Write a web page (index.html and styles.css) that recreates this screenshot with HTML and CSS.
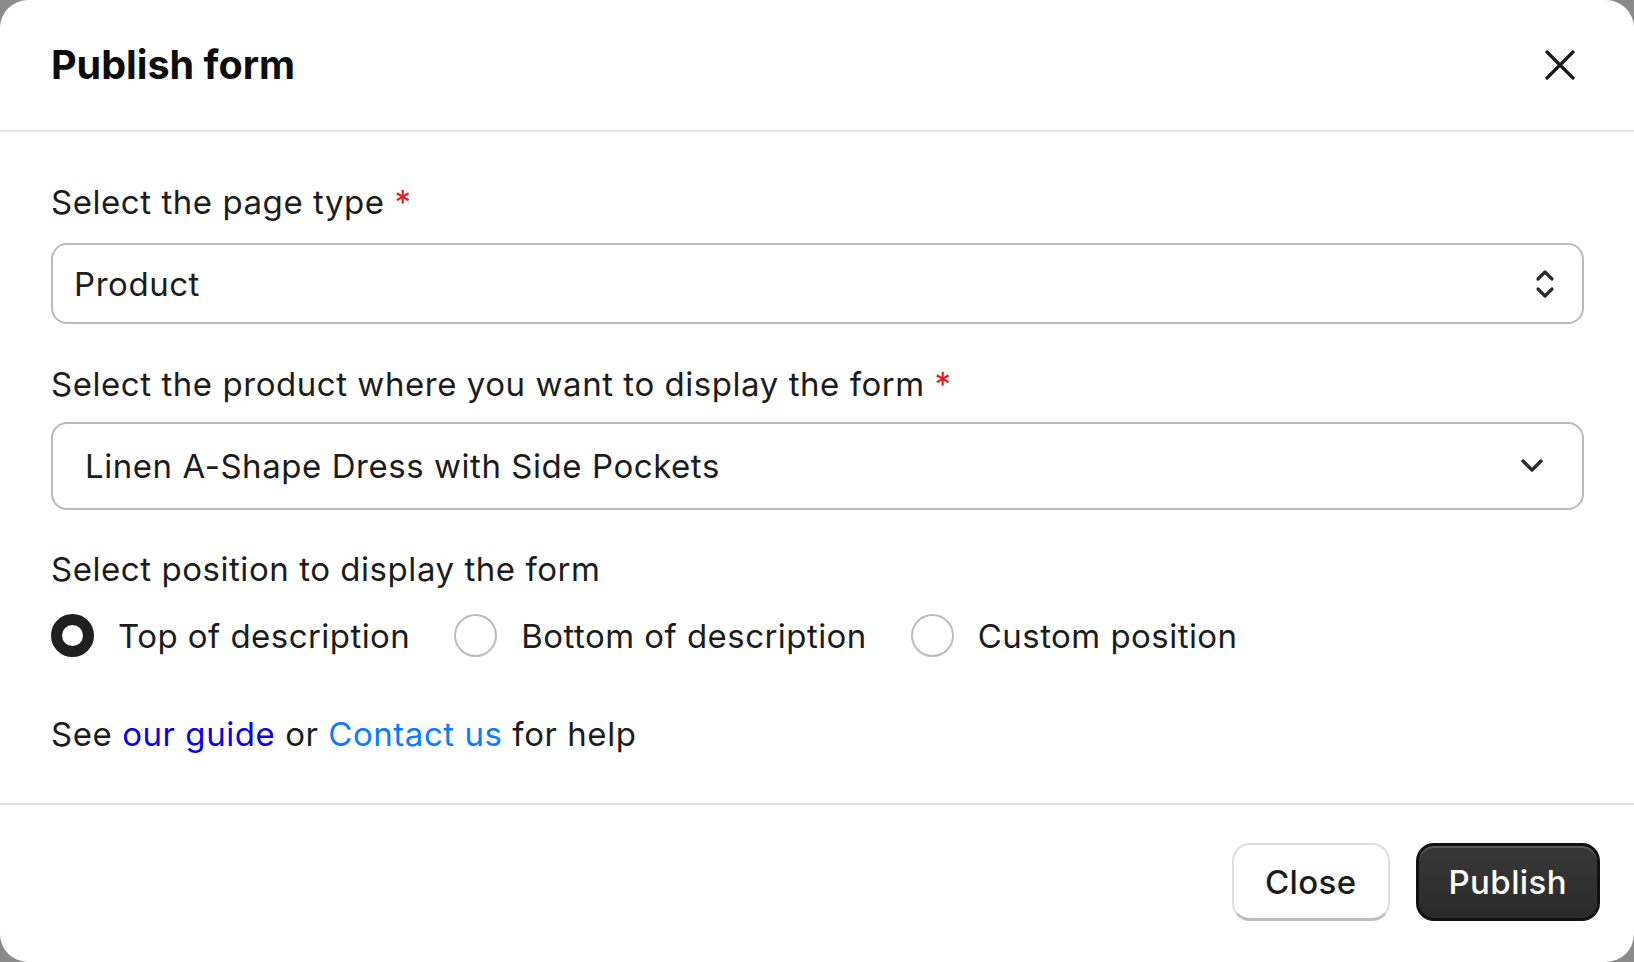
FILE: index.html
```html
<!DOCTYPE html>
<html lang="en">
<head>
<meta charset="utf-8">
<title>Publish form</title>
<link rel="stylesheet" href="styles.css">
</head>
<body>
<div class="modal">
  <header class="header">
    <h2 class="title">Publish form</h2>
    <button class="close-x" aria-label="Close">
      <svg width="30" height="30" viewBox="0 0 30 30"><path d="M2 2 L28 28 M28 2 L2 28" stroke="#1a1a1a" stroke-width="3.2" stroke-linecap="round" fill="none"/></svg>
    </button>
  </header>
  <main class="body">
    <p class="label">Select the page type <span class="req">*</span></p>
    <div class="field field-native">
      <span class="value">Product</span>
      <svg class="stepper" width="20" height="32" viewBox="0 0 20 32"><path d="M3 11 L10 4 L17 11 M3 21 L10 28 L17 21" stroke="#2b2b2b" stroke-width="3.2" stroke-linecap="round" stroke-linejoin="round" fill="none"/></svg>
    </div>
    <p class="label label-gap">Select the product where you want to display the form <span class="req">*</span></p>
    <div class="field field-custom">
      <span class="value">Linen A-Shape Dress with Side Pockets</span>
      <svg class="chev" width="24" height="16" viewBox="0 0 24 16"><path d="M3 3 L12 12 L21 3" stroke="#2b2b2b" stroke-width="3.4" stroke-linecap="round" stroke-linejoin="round" fill="none"/></svg>
    </div>
    <p class="label label-gap2">Select position to display the form</p>
    <div class="radios">
      <label class="radio-opt"><span class="radio checked"></span><span>Top of description</span></label>
      <label class="radio-opt"><span class="radio"></span><span>Bottom of description</span></label>
      <label class="radio-opt"><span class="radio"></span><span>Custom position</span></label>
    </div>
    <p class="help">See <a class="link-guide" href="#">our guide</a> or <a class="link-contact" href="#">Contact us</a> for help</p>
  </main>
  <footer class="footer">
    <button class="btn btn-secondary">Close</button>
    <button class="btn btn-primary">Publish</button>
  </footer>
</div>
</body>
</html>
```

FILE: styles.css
```css
html, body {
  margin: 0;
  height: 100%;
}
body {
  background: #8a8a8a;
  font-family: Inter, "Noto Sans", "Liberation Sans", sans-serif;
  color: #1c1c1c;
}
.modal {
  width: 1634px;
  height: 962px;
  background: #fff;
  border-radius: 28px;
  overflow: hidden;
  display: flex;
  flex-direction: column;
}
.header {
  box-sizing: border-box;
  height: 132px;
  flex-shrink: 0;
  border-bottom: 2px solid #e3e3e3;
  display: flex;
  align-items: center;
  justify-content: space-between;
  padding: 0 59px 0 51px;
}
.title {
  margin: 0;
  font-size: 39.5px;
  line-height: 48px;
  font-weight: 700;
  color: #0d0d0d;
}
.close-x {
  border: 0;
  background: none;
  padding: 0;
  width: 30px;
  height: 30px;
  display: flex;
}
.body {
  flex: 1;
  padding: 50px 50px 0 51px;
  font-size: 33px;
  letter-spacing: 0.55px;
}
.label {
  margin: 0;
  line-height: 40px;
}
.label-gap { margin-top: 40px; }
.label-gap2 { margin-top: 39px; }
.req { color: #e51c1c; }
.field {
  box-sizing: border-box;
  border: 2px solid #b9b9b9;
  border-radius: 16px;
  display: flex;
  align-items: center;
  justify-content: space-between;
}
.field-native {
  margin-top: 21px;
  height: 81px;
  padding: 0 27px 0 21px;
}
.field-custom {
  margin-top: 18px;
  height: 88px;
  padding: 0 38px 0 32px;
}
.stepper, .chev { display: block; }
.radios {
  margin-top: 25px;
  display: flex;
  gap: 44px;
  height: 43px;
  align-items: center;
}
.radio-opt {
  display: flex;
  align-items: center;
  gap: 24px;
  letter-spacing: 0.45px;
}
.radio {
  box-sizing: border-box;
  width: 43px;
  height: 43px;
  border-radius: 50%;
  border: 2px solid #bcbcbc;
  background: #fff;
}
.radio.checked {
  border: 11px solid #1f1f1f;
}
.help {
  margin: 57px 0 0;
  line-height: 40px;
}
.help a { text-decoration: none; }
.link-guide { color: #0a00ee; }
.link-contact { color: #0b7bff; }
.footer {
  box-sizing: border-box;
  height: 159px;
  flex-shrink: 0;
  border-top: 2px solid #e3e3e3;
  display: flex;
  justify-content: flex-end;
  align-items: flex-start;
  gap: 26px;
  padding: 38px 34px 0 0;
}
.btn {
  box-sizing: border-box;
  height: 78px;
  border-radius: 18px;
  font-family: inherit;
  font-size: 33px;
  font-weight: 500;
  letter-spacing: 0.4px;
  cursor: pointer;
}
.btn-secondary {
  background: #fff;
  color: #1c1c1c;
  border: 2px solid #dedede;
  border-bottom: 3px solid #bdbdbd;
  padding: 0 31px;
}
.btn-primary {
  background: linear-gradient(#383838, #2a2a2a);
  color: #fff;
  border: 3px solid #111;
  box-shadow: inset 0 2px 0 rgba(255, 255, 255, 0.18);
  padding: 0 30px;
}
```
